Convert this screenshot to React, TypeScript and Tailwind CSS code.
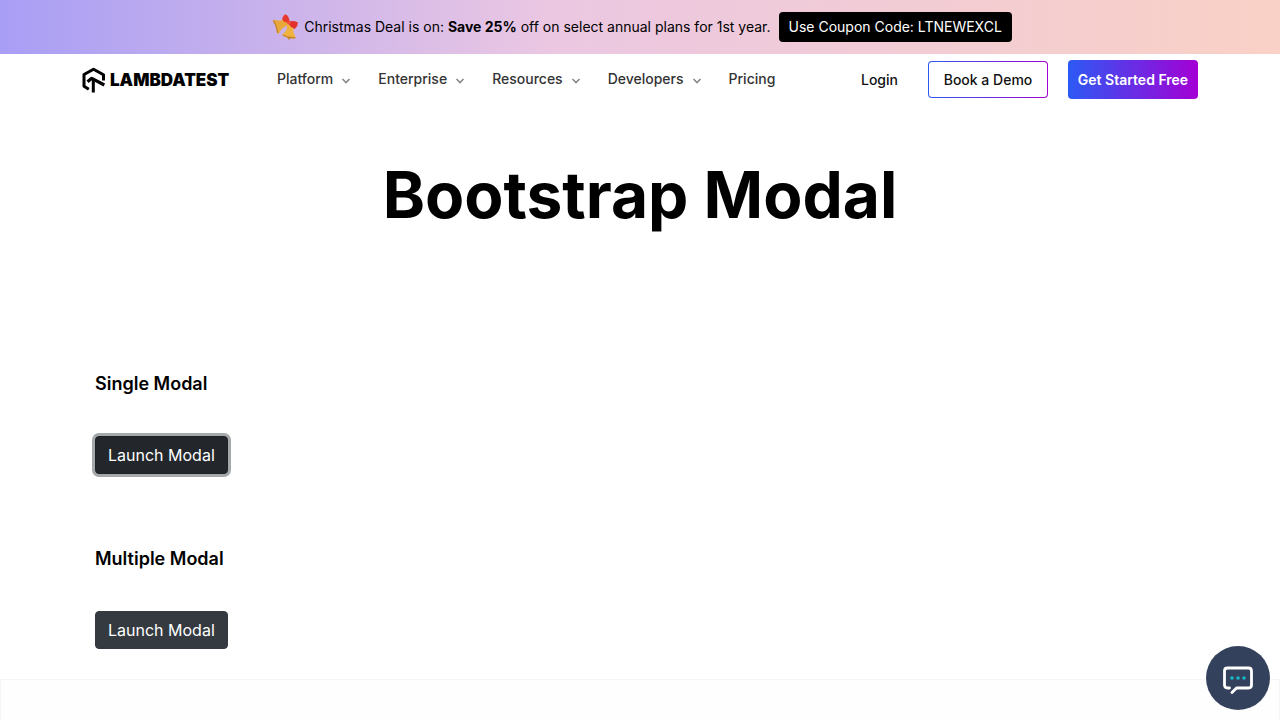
import React from "react";

const menus = ["Platform", "Enterprise", "Resources", "Developers"];

function Bells() {
  return (
    <svg viewBox="0 0 28 28" className="h-7 w-7 shrink-0" aria-hidden="true">
      <path d="M1 7.500 Q1.500 6.200 3.500 7 Q8.500 8.500 12.500 6 L17.500 12 Q11 13 7.500 19.500 Q6.500 21.500 5 20 Q5 13 1 7.500Z" fill="#e9a83a" />
      <path d="M1.300 7.600 Q4.500 12 5.600 20" stroke="#c4822c" strokeWidth="1.300" fill="none" />
      <path d="M15 11 L22 13.500 Q20 19 23.500 23.500 Q24 25.800 21.500 25.500 Q15 25.500 10.500 22.500 Q9.500 20.800 12 20.300 Q15.500 17 15 11Z" fill="#f0b33f" />
      <path d="M10.800 22 Q16 25 23.300 24.700" stroke="#c4822c" strokeWidth="1.300" fill="none" />
      <circle cx="17" cy="25.300" r="1.200" fill="#c4822c" />
      <path d="M16 9.500 Q10.500 9.500 10.200 5.500 Q11 2 13.500 1.200 Q17 3 17.500 8Z" fill="#e8392f" />
      <path d="M17.500 8.500 Q21 7.200 26 9.500 Q26 13 22.800 16 Q19 15 17 11.500Z" fill="#e2302c" />
      <circle cx="16.800" cy="9.600" r="2" fill="#f04b3c" />
    </svg>
  );
}

function Logo() {
  return (
    <a href="#" aria-label="LambdaTest" className="flex w-[147px] items-center gap-1 text-black">
      <svg viewBox="0 0 24 26" className="h-[26px] w-6 shrink-0" fill="none" stroke="currentColor" strokeWidth="3" aria-hidden="true">
        <path d="M6.800 22.300 L2 19.300 V7.500 L11.500 2.200 L21.500 7.800 V13.500" strokeLinejoin="round" />
        <path d="M5.500 14.800 L9.800 11.300 L22.300 18" strokeWidth="3.200" strokeLinejoin="round" />
        <path d="M11.300 12 V25.500" />
      </svg>
      <span className="text-[17px] leading-6 font-black">LAMBDATEST</span>
    </a>
  );
}

function Chevron() {
  return (
    <svg viewBox="0 0 10 10" className="mt-1 h-[10px] w-[10px]" fill="none" stroke="#888" strokeWidth="1.600" aria-hidden="true">
      <path d="M1.500 3 L5 6.500 L8.500 3" />
    </svg>
  );
}

function ModalSection({ title, active }: { title: string; active?: boolean }) {
  return (
    <section className="flex flex-col items-start gap-[38px]">
      <h2 className="text-lg leading-7 font-semibold">{title}</h2>
      <button
        type="button"
        className={
          active
            ? "h-[38px] rounded-sm border border-[#1d2124] bg-[#23272b] px-3 text-base text-white ring-3 ring-[#a5a9ac]"
            : "h-[38px] rounded-sm border border-[#343a40] bg-[#343a40] px-3 text-base text-white"
        }
      >
        Launch Modal
      </button>
    </section>
  );
}

export default function App() {
  return (
    <div className="flex h-screen flex-col overflow-hidden bg-white font-['Inter',sans-serif] text-black">
      <div className="flex h-[54px] shrink-0 items-center justify-center bg-[linear-gradient(90deg,#a89ef5_0%,#ebc7e2_43%,#f9d1c6_100%)] pl-1 text-sm">
        <Bells />
        <p className="ml-1 whitespace-nowrap">
          Christmas Deal is on: <b>Save 25%</b> off on select annual plans for 1st year.
        </p>
        <span className="ml-2 rounded-sm bg-black px-2.5 py-[5px] whitespace-nowrap text-white">
          Use Coupon Code: LTNEWEXCL
        </span>
      </div>

      <header className="flex h-[51px] shrink-0 items-center px-[82px] text-sm font-medium">
        <Logo />
        <nav className="ml-12 flex items-center gap-[27px] pb-px text-[#333]">
          {menus.map((name) => (
            <button key={name} type="button" className="flex items-center gap-2">
              {name}
              <Chevron />
            </button>
          ))}
          <a href="#">Pricing</a>
        </nav>
        <div className="ml-auto flex items-center text-[#111]">
          <a href="#" className="mr-[30px]">Login</a>
          <a href="#" className="mr-5 rounded-sm bg-[linear-gradient(90deg,#2c5af5,#a400d4)] p-px">
            <span className="flex h-[35px] w-[118px] items-center justify-center rounded-[3px] bg-white">Book a Demo</span>
          </a>
          <a href="#" className="flex h-[39px] w-[130px] items-center justify-center rounded-sm bg-[linear-gradient(90deg,#2c5af5,#a400d4)] font-semibold text-white">
            Get Started Free
          </a>
        </div>
      </header>

      <main className="flex flex-1 flex-col">
        <h1 className="pt-[50px] text-center text-[64px] leading-20 font-bold">Bootstrap Modal</h1>
        <div className="flex flex-col gap-[71px] px-[95px] pt-[135px] pb-[30px]">
          <ModalSection title="Single Modal" active />
          <ModalSection title="Multiple Modal" />
        </div>
        <div className="flex-1 border border-b-0 border-[#f5f5f5] bg-[#fefefe]" />
      </main>

      <button
        type="button"
        aria-label="Open chat"
        className="fixed right-2.5 bottom-2.5 flex h-16 w-16 items-center justify-center rounded-full bg-[#33415c]"
      >
        <svg viewBox="0 0 32 32" className="h-8 w-8" fill="none" aria-hidden="true">
          <path d="M7.500 26 H5.500 Q2.500 26 2.500 23 V9 Q2.500 6 5.500 6 H26.500 Q29.500 6 29.500 9 V23 Q29.500 26 26.500 26 H14.500 L10 30.500" stroke="white" strokeWidth="2.800" strokeLinecap="round" strokeLinejoin="round" />
          <g fill="#14b8c4">
            <circle cx="10" cy="16" r="1.800" />
            <circle cx="16" cy="16" r="1.800" />
            <circle cx="22" cy="16" r="1.800" />
          </g>
        </svg>
      </button>
    </div>
  );
}
